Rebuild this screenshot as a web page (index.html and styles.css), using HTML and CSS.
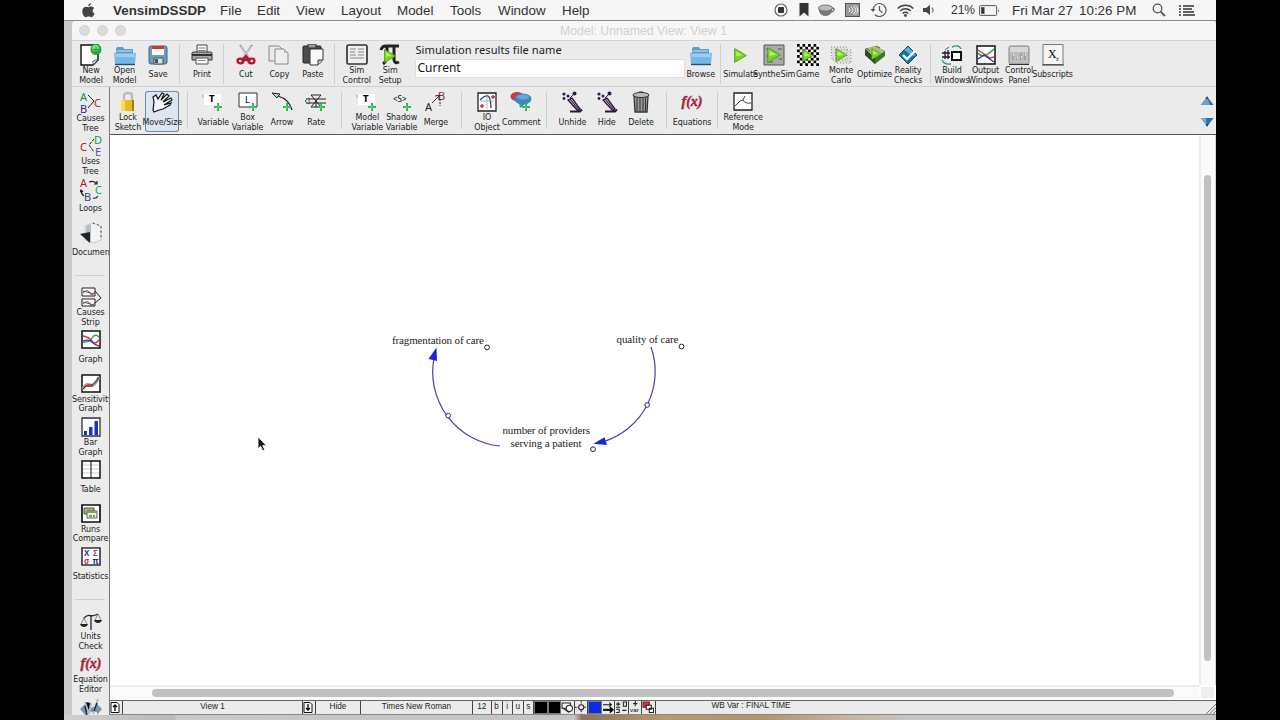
FILE: index.html
```
<!DOCTYPE html>
<html lang="en">

<head>
    <meta charset="UTF-8">
    <meta name="viewport" content="width=device-width, initial-scale=1.0">
    <title>VensimDSSDP</title>
    <link rel="stylesheet" href="styles.css">
</head>

<body>
    <!-- shared icon parts -->
    <svg class="defs">
        <symbol id="plus" viewBox="0 0 8 8"><path d="M3 0h2v3h3v2H5v3H3V5H0V3h3z" fill="#23b04a"/><path d="M3.7 1v6M1 4h6" stroke="#7be08d" stroke-width=".6"/></symbol>
        <symbol id="play" viewBox="0 0 12 14"><path d="M.5.5L11.5 7 .5 13.5z" fill="#7ed321" stroke="#4c9a1a" stroke-width=".8"/><path d="M2 3l6 3.700-6 1z" fill="#b6ee6a"/></symbol>
        <symbol id="folder" viewBox="0 0 22 22"><path d="M2 20V5l1-2h6l1 2h9v15z" fill="#5b9bd0"/><path d="M3 8h15V6H3z" fill="#8fc4ea"/><path d="M0 9h22l-1 11H1z" fill="#78b6e6"/><path d="M1 10h20v3H1z" fill="#9ccdf2"/><path d="M1 20.500h20" stroke="#24506f" stroke-width="1.400"/></symbol>
        <symbol id="wand" viewBox="0 0 22 22"><path d="M7 9l4-2 8 11-2 2z" fill="#b9a7c8" stroke="#2b1836" stroke-width="1.300"/><path d="M9 20.500h10l2-2" fill="none" stroke="#2b1836" stroke-width="2"/><path d="M9 8l9 11" stroke="#2b1836"/><path d="M9 7l4-4" stroke="#2b1c48"/><g fill="#2b1c48"><circle cx="3" cy="3" r="1.600"/><circle cx="7" cy="5" r="1.500"/><circle cx="3" cy="7.500" r="1.400"/><circle cx="13.500" cy="2.500" r="2"/></g></symbol>
        <symbol id="fx" viewBox="0 0 22 22"><text x="11" y="15" text-anchor="middle" textLength="21" lengthAdjust="spacingAndGlyphs" class="fx">f(x)</text></symbol>
    </svg>

    <div class="desktop">
        <div class="menubar">
            <svg width="13" height="15" viewBox="0 0 13 15" fill="#444"><path d="M9 0c.1 1.800-1.200 3.200-2.700 3.300C6.100 1.700 7.400.3 9 0zM6.500 4.300c.7 0 1.600-.8 2.900-.7 1.300.1 2.200.6 2.800 1.500-2.300 1.500-1.900 4.500.4 5.500-.7 1.800-1.900 3.600-3.200 3.600-1.100 0-1.500-.6-2.800-.6s-1.700.6-2.700.6C2 14.200.3 11.200.3 8.300c0-2.900 1.800-4.500 3.600-4.500 1.100 0 2 .5 2.600.5z"/></svg>
            <b>VensimDSSDP</b>
            <span>File</span>
            <span>Edit</span>
            <span>View</span>
            <span>Layout</span>
            <span>Model</span>
            <span>Tools</span>
            <span>Window</span>
            <span>Help</span>
            <svg width="14" height="14" viewBox="0 0 14 14"><circle cx="7" cy="7" r="6" fill="none" stroke="#666" stroke-width="1.200"/><rect x="4" y="4" width="6" height="6" rx="1" fill="#333"/></svg>
            <svg width="10" height="14" viewBox="0 0 10 14"><path d="M.5 0h9v13.500L5 9.500.5 13.500z" fill="#333"/></svg>
            <svg width="17" height="13" viewBox="0 0 17 13"><ellipse cx="7.500" cy="4" rx="7" ry="3" fill="#bbb" stroke="#777"/><path d="M.5 4c0 5 3 8 7 8s7-3 7-8c-2 4-12 4-14 0z" fill="#777"/><path d="M14 4c4 0 2 4-1 4" fill="none" stroke="#777" stroke-width="1.300"/></svg>
            <svg width="15" height="14" viewBox="0 0 15 14"><rect x=".5" y=".5" width="14" height="13" fill="#999" stroke="#555"/><path d="M4 5q2 2 0 4M6 4q4 3 0 6M8 3q6 4 0 8M10.500 2.500q5 4.500 0 9" fill="none" stroke="#f4f4f4"/></svg>
            <svg width="17" height="16" viewBox="0 0 17 16" fill="none" stroke="#555"><path d="M3 8a6.500 6.500 0 1 1 2 4.700" stroke-width="1.200"/><path d="M9.500 4v4.500l3 2" stroke-width="1.200"/><path d="M.5 7h5L3 10z" fill="#555" stroke="none"/></svg>
            <svg width="17" height="13" viewBox="0 0 17 13" fill="none" stroke="#444" stroke-width="1.500"><path d="M.7 4.500a11 11 0 0 1 15.600 0M3.200 7a7.500 7.500 0 0 1 10.600 0M5.700 9.500a4 4 0 0 1 5.600 0"/><circle cx="8.500" cy="11.500" r=".7"/></svg>
            <svg width="13" height="12" viewBox="0 0 13 12"><path d="M0 4h3l4-3v10L3 8H0z" fill="#444"/><path d="M9 3.500q2 2.500 0 5" fill="none" stroke="#777" stroke-width="1.200"/></svg>
            <span class="small">21%</span>
            <svg width="21" height="11" viewBox="0 0 21 11"><rect x=".6" y=".6" width="17" height="9.800" rx="1" fill="none" stroke="#555"/><path d="M2.200 2.200h3.300v6.600H2.200z" fill="#333"/><path d="M19 3.500q1.500 2 0 4" fill="#555"/></svg>
            <span>Fri Mar 27</span>
            <span>10:26 PM</span>
            <svg width="14" height="14" viewBox="0 0 14 14" fill="none" stroke="#555"><circle cx="5.500" cy="5.500" r="4.300" stroke-width="1.300"/><path d="M8.700 8.700L13 13" stroke-width="1.800"/></svg>
            <svg width="16" height="11" viewBox="0 0 16 11" stroke="#333" stroke-width="1.400"><path d="M0 1h2M4 1h11M0 4h2M4 4h9M0 7h2M4 7h11M0 10h2M4 10h12"/></svg>
        </div>

        <div class="window">
            <div class="titlebar">
                <i></i><i></i><i></i>
                <span>Model: Unnamed View: View 1</span>
            </div>

            <div class="toolbar main-tools">
                <div class="tool"><svg viewBox="0 0 22 22"><path d="M1 1h17v15l-5 5H1z" fill="#fff" stroke="#111" stroke-width="1.400"/><path d="M13 21v-4l5-2" fill="#ddd" stroke="#333" stroke-width=".7"/><circle cx="16" cy="5.500" r="5.500" fill="#27a83f"/><circle cx="15.500" cy="4" r="3.300" fill="#7de08b"/><path d="M16 2.500v6M13 5.500h6" stroke="#2a9140"/></svg><p>New<br>Model</p></div>
                <div class="tool"><svg><use href="#folder"/></svg><p>Open<br>Model</p></div>
                <div class="tool"><svg viewBox="0 0 22 22"><rect x="2" y="2" width="18" height="18" rx="2" fill="#6b9db7" stroke="#3c6880"/><path d="M5 2h12v9H5z" fill="#f7f7f7"/><path d="M5 2h12v3H5z" fill="#cc3b33"/><path d="M7 14h9v6H7z" fill="#d5e0e5" stroke="#456"/><path d="M8 15h3v4H8z" fill="#355c72"/></svg><p>Save</p></div>
                <div class="sep"></div>
                <div class="tool"><svg viewBox="0 0 22 22"><path d="M6 9V1h10v8" fill="#fff" stroke="#444"/><path d="M7.500 4h7M7.500 6.500h7" stroke="#777"/><path d="M1 9q0-1 2-1h16q2 0 2 1v7H1z" fill="#aaa" stroke="#333"/><path d="M1 11h20" stroke="#333" stroke-width="2"/><path d="M5 14h12v6H5z" fill="#fafafa" stroke="#555"/><path d="M7 16.500h8" stroke="#999"/></svg><p>Print</p></div>
                <div class="sep"></div>
                <div class="tool"><svg viewBox="0 0 22 22"><path d="M5 1l9 13M17 1L8 14" stroke="#999" stroke-width="2"/><path d="M5.500 2l8 11M16.500 2l-8 11" stroke="#eee" stroke-width=".7"/><g fill="none" stroke="#ae1830" stroke-width="2.300"><ellipse cx="5.500" cy="17" rx="3" ry="2.300"/><ellipse cx="16.500" cy="17" rx="3" ry="2.300"/><path d="M8 16l3-4 3 4z"/></g></svg><p>Cut</p></div>
                <div class="tool"><svg viewBox="0 0 22 22"><path d="M1 2h10l3 3v12H1z" fill="#e8e8e8" stroke="#888"/><path d="M7 5h9l4 4v11H7z" fill="#eee" stroke="#888"/><path d="M16 5v4h4z" fill="#bbb"/></svg><p>Copy</p></div>
                <div class="tool"><svg viewBox="0 0 22 22"><rect x="1" y="2" width="18" height="17" rx="1" fill="#4b4d50" stroke="#222"/><path d="M6 0h8v4H6z" fill="#999" stroke="#333"/><path d="M8 5h13v11l-5 5H8z" fill="#fafafa" stroke="#333"/><path d="M16 21v-5h5" fill="#ccc" stroke="#333"/></svg><p>Paste</p></div>
                <div class="sep"></div>
                <div class="tool"><svg viewBox="0 0 22 22"><rect x="1" y="1" width="20" height="19" rx="1.500" fill="#eee" stroke="#333" stroke-width="1.700"/><path d="M4 5h6M4 8h5M12 5h6M12 8h6M4 11h6M4 14h14M12 11h6" stroke="#888"/></svg><p>Sim<br>Control</p></div>
                <div class="tool"><svg viewBox="0 0 22 22"><path d="M2 6q1-4 5-4h13M8 3v9q-1 6-4 8M15 3v13q1 4 5 2" fill="none" stroke="#222" stroke-width="3"/><use href="#play" x="5" y="5" width="12" height="14"/></svg><p>Sim<br>Setup</p></div>
                <div class="run-name">
                    <label>Simulation results file name</label>
                    <div class="field">Current</div>
                </div>
                <div class="tool"><svg><use href="#folder"/></svg><p>Browse</p></div>
                <div class="sep narrow"></div>
                <div class="tool"><svg viewBox="0 0 22 22"><use href="#play" x="4" y="4" width="13" height="15"/></svg><p>Simulate</p></div>
                <div class="tool"><svg viewBox="0 0 22 22"><path d="M1 1h20v20H1z" fill="#aaa" stroke="#555"/><path d="M3 5h4M3 12h3M15 5h4M16 15h3M4 18h6" stroke="#555"/><use href="#play" x="4" y="3" width="14" height="16"/></svg><p>SyntheSim</p></div>
                <div class="tool"><svg viewBox="0 0 22 22"><defs><pattern id="check" width="5.500" height="5.500" patternUnits="userSpaceOnUse"><path d="M0 0h5.500v5.500H0z" fill="#fff"/><path d="M0 0h2.750v2.750H0zM2.750 2.750H5.500V5.500H2.750z"/></pattern></defs><path d="M0 0h22v22H0z" fill="url(#check)"/><use href="#play" x="5" y="5" width="12" height="13"/></svg><p>Game</p></div>
                <div class="tool"><svg viewBox="0 0 22 22"><path d="M1 3h16v13H2zM5 6h16v13H6z" fill="#ddd" stroke="#888" stroke-dasharray="1 2"/><use href="#play" x="5" y="4" width="13" height="14"/></svg><p>Monte<br>Carlo</p></div>
                <div class="tool"><svg viewBox="0 0 22 22"><path d="M1 5l10-3 10 5v5l-10 8L1 11z" fill="#407434"/><path d="M1 5l10-3 10 5-10 7z" fill="#a1c77d"/><path d="M1 5l10 9v6L1 11z" fill="#2d4a22"/><use href="#play" x="7" y="4" width="11" height="12"/><path d="M2 4l4 3M12 2l4 2" stroke="#7c452c"/></svg><p>Optimize</p></div>
                <div class="tool"><svg viewBox="0 0 22 22"><path d="M11 2l9 9-9 9-9-9z" fill="#1974a3" stroke="#164c6a"/><path d="M11 3l8 8-3 1-9-6z" fill="#5ab6da"/><path d="M6 11l4 4 8-8" fill="none" stroke="#fff" stroke-width="2.400"/></svg><p>Reality<br>Checks</p></div>
                <div class="sep"></div>
                <div class="tool"><svg viewBox="0 0 22 22"><path d="M11 8h9v8h-9z" fill="#fff" stroke="#111" stroke-width="2"/><path d="M11 3q7-3 9 2M10 20q-7 1-9-4" fill="none" stroke="#2aa15c" stroke-width="1.400"/><path d="M1 9h8M1 13h8M4 7v8M7 6v9" stroke="#17192e" stroke-width="1.300"/><path d="M4 6l4-3" stroke="#315ea5"/></svg><p>Build<br>Windows</p></div>
                <div class="tool"><svg viewBox="0 0 22 22"><path d="M2 2h18v18H2z" fill="#fff" stroke="#111" stroke-width="1.500"/><path d="M3 9q5 7 16-4" fill="none" stroke="#27985a" stroke-width="1.400"/><path d="M3 6l12 8 4-1" fill="none" stroke="#d43a3a" stroke-width="1.400"/><path d="M3 15l6-4 10 7" fill="none" stroke="#283895" stroke-width="1.400"/></svg><p>Output<br>Windows</p></div>
                <div class="tool"><svg viewBox="0 0 22 22"><rect x="1" y="2" width="20" height="18" rx="1.500" fill="#bdbdbd" stroke="#888"/><path d="M2 3h18v5H2z" fill="#d8d8d8"/><path d="M5 10v6M9 13v3M13 9v7M17 10v6" stroke="#a2a2a2" stroke-width="2"/><path d="M5 11h1M9 14h1M13 13h1M17 11h1" stroke="#e8e8e8" stroke-width="2"/><path d="M1 20.500h20" stroke="#333"/></svg><p>Control<br>Panel</p></div>
                <div class="tool"><svg viewBox="0 0 22 22"><path d="M1 .5h20v20H1z" fill="#f5f5f5" stroke="#6e7c87"/><path d="M0 21h22" stroke="#333"/><text x="6" y="14" class="serif">X</text><text x="14" y="17" class="sub">z</text></svg><p>Subscripts</p></div>
            </div>

            <div class="work">
                <div class="sidebar">
                    <div class="tool"><svg viewBox="0 0 22 22"><text x="0" y="9" fill="#168f3d">A</text><text x="0" y="21" fill="#27278e">B</text><text x="14" y="15" fill="#b32135">C</text><path d="M8 3l6 6-6 7" fill="none" stroke="#222"/></svg><p>Causes<br>Tree</p></div>
                    <div class="tool"><svg viewBox="0 0 22 22"><text x="0" y="16" fill="#a41e2c">C</text><text x="14" y="9" fill="#219d45">D</text><text x="15" y="21" fill="#5352a6">E</text><path d="M14 4l-5 6 5 7" fill="none" stroke="#222" stroke-dasharray="3 1"/></svg><p>Uses<br>Tree</p></div>
                    <div class="tool"><svg viewBox="0 0 22 22"><text x="0" y="8" fill="#9f1f2e">A</text><text x="15" y="15" fill="#25a34a">C</text><text x="4" y="22" fill="#3838a0">B</text><path d="M9 3q5-2 8 2m0-3v3h-3M1 11q0 4 3 6M0 13l1-2 2 2M13 19q3 1 5-2" fill="none" stroke="#222" stroke-width="1.200"/></svg><p>Loops</p></div>
                    <div class="tool"><svg viewBox="0 0 22 22"><path d="M5 4l7-3 9 3v14l-8 3-8-3z" fill="#f1f3f4" stroke="#bbb" stroke-width=".7"/><path d="M6 4l5-2v18l-5-2z" fill="#b4c0c5"/><path d="M0 12l10 9V10z" fill="#202427"/><path d="M13 1l8 3v14" fill="none" stroke="#222" stroke-dasharray="1.500 3"/></svg><p class="long">Document</p></div>
                    <hr>
                    <div class="tool"><svg viewBox="0 0 22 22"><g fill="#fff" stroke="#222"><path d="M2 2h13v8H2zM2 13h13v7H2z"/><path d="M15 5l6 7-6 5" fill="none"/></g><path d="M3 7q5-5 7 0t5-2M3 18q5-5 7 0t5-2" fill="none" stroke="#a54053"/><path d="M3 5l11 3M3 16l11 3" stroke="#555"/></svg><p>Causes<br>Strip</p></div>
                    <div class="tool"><svg viewBox="0 0 22 22"><path d="M2 2h18v17H2z" fill="#fff" stroke="#111" stroke-width="1.500"/><path d="M3 13q6 1 9-4t7-1" fill="none" stroke="#27985a" stroke-width="1.300"/><path d="M3 7q6 1 9 5t7-1" fill="none" stroke="#d43a3a" stroke-width="1.300"/><path d="M3 12q6-2 9 1t7 4" fill="none" stroke="#283895" stroke-width="1.300"/></svg><p>Graph</p></div>
                    <div class="tool"><svg viewBox="0 0 22 22"><path d="M2 2h18v17H2z" fill="#fff" stroke="#111" stroke-width="1.500"/><path d="M3 16q3-6 7-4t9-8" fill="none" stroke="#999" stroke-width="3"/><path d="M3 16q3-5 7-4t9-8" fill="none" stroke="#333"/><path d="M6 13h7" stroke="#be4141" stroke-width="2"/></svg><p class="long">Sensitivity</p><p class="second">Graph</p></div>
                    <div class="tool"><svg viewBox="0 0 22 22"><path d="M2 2h18v18H2z" fill="#fff" stroke="#333" stroke-width="1.300"/><path d="M4 15h3v4H4zM9 11h3.500v8H9zM14.500 5H18v14h-3.500z" fill="#1735c7"/></svg><p>Bar<br>Graph</p></div>
                    <div class="tool"><svg viewBox="0 0 22 22"><path d="M2 2h18v17H2z" fill="#fff" stroke="#111" stroke-width="1.500"/><path d="M3 6h16M3 10h16M3 14h16" stroke="#ccc"/><path d="M11 2v17" stroke="#111"/></svg><p>Table</p></div>
                    <div class="tool"><svg viewBox="0 0 22 22"><path d="M2 2h18v17H2z" fill="#fff" stroke="#111" stroke-width="1.700"/><path d="M4 5h10v6H4z" fill="#b7a98e" stroke="#555"/><path d="M7 8h10v7H7z" fill="#eef4dc" stroke="#496b3d"/><path d="M7 8h10v2H7z" fill="#829f65"/><path d="M9 13h3M14 12v2" stroke="#222"/></svg><p>Runs<br>Compare</p></div>
                    <div class="tool"><svg viewBox="0 0 22 22"><path d="M2 2h18v17H2z" fill="#fff" stroke="#333" stroke-width="1.600"/><g class="stat"><text x="4" y="9.500" fill="#3434af">X</text><text x="13" y="9.500" fill="#b63f56">Σ</text><text x="4" y="17.500" fill="#b63f56">σ</text><text x="12.500" y="17.500" fill="#292996">π</text></g></svg><p>Statistics</p></div>
                    <hr>
                    <div class="tool"><svg viewBox="0 0 22 22"><path d="M11 5v15M4 8q4-4 7-2 3 0 7-2" fill="none" stroke="#222" stroke-width="1.300"/><path d="M4 8l-3 6M4 8l3 6M18 4l-3 6M18 4l3 6" stroke="#666" stroke-width=".8"/><path d="M0 14h8q-1 3-4 3t-4-3zM14 10h8q-1 3-4 3t-4-3z" fill="#222"/></svg><p>Units<br>Check</p></div>
                    <div class="tool"><svg><use href="#fx"/></svg><p>Equation<br>Editor</p></div>
                    <div class="tool"><svg viewBox="0 0 22 22"><path d="M0 12l6-6v3l5 2 5-2V6l6 6-5 6v-3H6v4z" fill="#7796ab"/><path d="M5 5l4 12 2-11M13 17l5-15" stroke="#a9bfcc" stroke-width="2"/><path d="M5 9l2 9M14 14l3-8" stroke="#1b2e3d" stroke-width="1.500"/></svg></div>
                </div>

                <div class="view">
                    <div class="toolbar sketch-tools">
                        <div class="tool"><svg viewBox="0 0 22 22"><path d="M7 10V4q0-2 4-2t4 2v6" fill="none" stroke="#bbb" stroke-width="2.300"/><path d="M4 9h13v11H4z" fill="#e7b922"/><path d="M4 9h4v11H4z" fill="#f8db61"/><path d="M15 9h2v11h-2z" fill="#aa7c0b"/></svg><p>Lock<br>Sketch</p></div>
                        <div class="tool active"><svg viewBox="0 0 22 22"><path d="M2 19l1-8-1-5 3-2 2 4 4-6 2 1-3 6 6-6 2 2-6 6 8-4 1 2-8 5 7-2-1 2-7 4-4 1-5 2z" fill="#f2f5fa" stroke="#111" stroke-width="1.200"/></svg><p>Move/Size</p></div>
                        <div class="sep"></div>
                        <div class="tool"><svg viewBox="0 0 22 22"><path d="M2 3h17v11H2z" fill="#fff"/><text x="7" y="11" class="letter">T</text><path d="M0 4h1v3" stroke="#aaa" fill="none"/><use href="#plus" x="12" y="12" width="8" height="8"/></svg><p>Variable</p></div>
                        <div class="tool"><svg viewBox="0 0 22 22"><path d="M2 2h18v14H2z" fill="#fff" stroke="#333"/><text x="8" y="12" class="light">L</text><use href="#plus" x="12" y="12" width="8" height="8"/></svg><p>Box<br>Variable</p></div>
                        <div class="tool"><svg viewBox="0 0 22 22"><path d="M1 2l8 1-3 4z" fill="#bcd9cc" stroke="#222"/><path d="M7 5q11 3 14 14" fill="none" stroke="#222" stroke-width="1.200"/><use href="#plus" x="12" y="12" width="8" height="8"/></svg><p>Arrow</p></div>
                        <div class="tool"><svg viewBox="0 0 22 22"><path d="M1 8h20M1 12h20M6 4h10L6 16h10zM11 10v6" fill="none" stroke="#222"/><path d="M0 10l4-3v6z" fill="#fff" stroke="#222" stroke-width=".8"/><use href="#plus" x="12" y="12" width="8" height="8"/></svg><p>Rate</p></div>
                        <div class="sep"></div>
                        <div class="tool"><svg viewBox="0 0 22 22"><path d="M2 3h17v11H2z" fill="#fff"/><text x="7" y="11" class="letter">T</text><path d="M0 4h1v3" stroke="#aaa" fill="none"/><use href="#plus" x="12" y="12" width="8" height="8"/></svg><p>Model<br>Variable</p></div>
                        <div class="tool"><svg viewBox="0 0 22 22"><text x="2" y="11" class="shadow">&lt;S&gt;</text><use href="#plus" x="12" y="12" width="8" height="8"/></svg><p>Shadow<br>Variable</p></div>
                        <div class="tool"><svg viewBox="0 0 22 22"><text x="0" y="20" fill="#222">A</text><text x="13" y="9" fill="#8e2639">B</text><path d="M7 12l8-8M15 4l-5 1M14 4v5" stroke="#333"/><path d="M15 8v7" stroke="#222" stroke-dasharray="2 1"/></svg><p>Merge</p></div>
                        <div class="sep"></div>
                        <div class="tool"><svg viewBox="0 0 22 22"><path d="M2 2h18v18H2z" fill="#fff" stroke="#222" stroke-width="1.300"/><path d="M4 9q5-5 8-4 3 2 3 12" fill="none" stroke="#26436c" stroke-width="1.300"/><path d="M11 3v15M4 10h14" stroke="#999" stroke-width=".7"/><path d="M15 6h4M17 4v4M4 15h4M6 13v4" stroke="#d92c42" stroke-width="1.500"/></svg><p>IO<br>Object</p></div>
                        <div class="tool"><svg viewBox="0 0 22 22"><ellipse cx="7" cy="5.500" rx="6.500" ry="4.500" fill="#c43b43"/><ellipse cx="13" cy="8" rx="8.500" ry="5.500" fill="#398ac0"/><ellipse cx="13" cy="6" rx="6" ry="2.500" fill="#62aad8"/><path d="M9 12l1 5 5-4z" fill="#398ac0"/><use href="#plus" x="12" y="12" width="8" height="8"/></svg><p>Comment</p></div>
                        <div class="sep"></div>
                        <div class="tool"><svg><use href="#wand"/></svg><p>Unhide</p></div>
                        <div class="tool"><svg><use href="#wand"/></svg><p>Hide</p></div>
                        <div class="tool"><svg viewBox="0 0 22 22"><path d="M4 5h14l-1 16H5z" fill="#999" stroke="#333" stroke-width="1.300"/><path d="M7 6v14M10 6v14M13 6v14M15.500 6v14" stroke="#333"/><ellipse cx="11" cy="4" rx="8" ry="2.500" fill="#bbb" stroke="#333"/><path d="M9 1h4" stroke="#333"/></svg><p>Delete</p></div>
                        <div class="sep"></div>
                        <div class="tool"><svg><use href="#fx"/></svg><p>Equations</p></div>
                        <div class="sep"></div>
                        <div class="tool"><svg viewBox="0 0 22 22"><path d="M2 2h18v17H2z" fill="#fff" stroke="#222" stroke-width="1.300"/><path d="M3 15l5-5 3-1 2-4M11 9q2 4 8 3" fill="none" stroke="#444"/></svg><p>Reference<br>Mode</p></div>
                        <div class="pager">
                            <svg width="14" height="10" viewBox="0 0 14 10"><path d="M7 .5l6.500 8.500H.5z" fill="#6fa0c8"/><path d="M7 .5L10 9l3.500 0z" fill="#396d9a"/><path d="M7 0l1.500 3h-3z" fill="#26455f"/></svg>
                            <svg width="14" height="10" viewBox="0 0 14 10"><path d="M.5 1h13L7 9.500z" fill="#6fa8cf"/><path d="M6 1h7.500L7 9.500z" fill="#336f9e"/><path d="M7 10L5.500 7h3z" fill="#26455f"/></svg>
                        </div>
                    </div>

                    <div class="sketch">
                        <svg class="diagram" width="1089" height="550" viewBox="110 135 1089 550">
                            <g fill="none" stroke="#4444ac" stroke-width="1.200">
                                <path d="M500 446A74.500 74.500 0 0 1 434 358"/>
                                <path d="M651 347A73.500 73.500 0 0 1 604 441.500"/>
                            </g>
                            <path d="M436.500 347.500L428.500 359 437 361zM593.500 443.700L604.500 437.300 607 445z" fill="#1a24dc"/>
                            <g fill="#fff" stroke="#26268c">
                                <circle cx="448.200" cy="415.700" r="2.300"/>
                                <circle cx="647.200" cy="405" r="2.300"/>
                            </g>
                            <g fill="#fff" stroke="#222">
                                <circle cx="487" cy="347.400" r="2.400"/>
                                <circle cx="681.500" cy="346.500" r="2.400"/>
                                <circle cx="593" cy="449.200" r="2.400"/>
                            </g>
                            <text x="392" y="344" textLength="92">fragmentation of care</text>
                            <text x="616.500" y="343" textLength="62">quality of care</text>
                            <text x="502.500" y="434" textLength="87.500">number of providers</text>
                            <text x="510.500" y="446.500" textLength="71">serving a patient</text>
                        </svg>
                        <div class="vscroll"><div></div></div>
                        <div class="hscroll"><div></div></div>
                        <div class="corner"></div>
                        <svg class="cursor" width="10" height="16" viewBox="0 0 10 16"><path d="M1 1v11.500l2.700-2.300 2 4.600 2-.9-2-4.400h3.600z" fill="#111" stroke="#fff" stroke-width=".8"/></svg>
                    </div>

                    <div class="status">
                        <div class="arrow"><svg width="10" height="11" viewBox="0 0 10 11"><path d="M1 .5h6l2 2v8H1z" fill="#fff" stroke="#111"/><path d="M5 9V3M3 5l2-2 2 2" fill="none" stroke="#111" stroke-width="1.400"/></svg></div>
                        <div class="view-name">View 1</div>
                        <div class="arrow"><svg width="10" height="11" viewBox="0 0 10 11"><path d="M1 .5h6l2 2v8H1z" fill="#fff" stroke="#111"/><path d="M5 2v6M3 6l2 2 2-2" fill="none" stroke="#111" stroke-width="1.400"/></svg></div>
                        <div class="hide">Hide</div>
                        <div class="font">Times New Roman</div>
                        <div>12</div>
                        <div>b</div>
                        <div>i</div>
                        <div>u</div>
                        <div>s</div>
                        <div class="swatch"></div>
                        <div class="swatch"></div>
                        <div><svg viewBox="0 0 12 12" fill="#fff" stroke="#222"><path d="M1 2h8v5H1z"/><circle cx="8" cy="7" r="3"/><path d="M2 7l6 4"/></svg></div>
                        <div><svg viewBox="0 0 12 12" fill="none" stroke="#222"><circle cx="6" cy="6" r="2.500"/><path d="M0 6h3M9 6h3M6 0v3M6 9v3" stroke-dasharray="1.500 1"/></svg></div>
                        <div class="swatch blue"></div>
                        <div><svg viewBox="0 0 12 12" stroke="#111"><path d="M1 3.500h8M7 1.500l2 2-2 2" fill="none"/><path d="M1 8.500h8" stroke-width="2"/><path d="M8 6l3 2.500L8 11z"/></svg></div>
                        <div><svg viewBox="0 0 12 12" fill="none" stroke="#222"><path d="M1 3h4M3 1v4M1 6h4M8 1h3v4H8zM1 8h3v3H1M7 9h4"/></svg></div>
                        <div><svg viewBox="0 0 12 12"><path d="M6 0v5M4 2.500h4" stroke="#222"/><text x="1" y="11" class="var">var</text></svg></div>
                        <div><svg viewBox="0 0 12 12"><path d="M1 1h6v5H1z" fill="#d53545" stroke="#622"/><path d="M4 4h5v4H4zM7 7h4v4H7z" fill="#fff" stroke="#222"/></svg></div>
                        <div class="message">WB Var : FINAL TIME</div>
                        <svg class="grip" width="10" height="10" viewBox="0 0 10 10" stroke="#777"><path d="M0 10L10 0M3.500 10L10 3.500M7 10l3-3"/></svg>
                    </div>
                </div>
            </div>
        </div>
        <div class="wallpaper"></div>
    </div>
</body>

</html>
```
FILE: styles.css
```
* {
    margin: 0;
    padding: 0;
    box-sizing: border-box;
}

body {
    height: 720px;
    overflow: hidden;
    background-color: #000;
    font-family: "Liberation Sans", Arial, sans-serif;
}

svg {
    display: block;
}

.defs {
    position: absolute;
    width: 0;
    height: 0;
}

.desktop {
    display: flex;
    flex-direction: column;
    width: 1152px;
    height: 720px;
    margin: 0 auto;
    background-color: #c9c9c9;
}

/* menu bar */
.menubar {
    display: grid;
    grid-template-columns: 31px 107px 37px 39px 45px 56px 53px 48px 64px 212px 25px 19px 27px 25px 27px 26px 28px 28px 33px 67px 73px 27px 20px;
    align-items: center;
    height: 21px;
    padding-left: 18px;
    border-bottom: 1px solid #8d8d8d;
    background-color: #f6f6f6;
    color: #333;
    font-size: 13.4px;
    white-space: nowrap;
}

.menubar .small {
    font-size: 12px;
}

/* window */
.window {
    width: 1144px;
    height: 694px;
    margin-left: 8px;
    border-radius: 4px 4px 0 0;
    background-color: #ebebeb;
}

.titlebar {
    display: flex;
    align-items: center;
    height: 20px;
    padding-left: 7px;
    border-bottom: 1px solid #d2d2d2;
    border-radius: 4px 4px 0 0;
    background-color: #f6f6f6;
}

.titlebar i {
    width: 11px;
    height: 11px;
    margin-right: 7px;
    border: 1px solid #d0d0d0;
    border-radius: 50%;
    background-color: #dcdcdc;
}

.titlebar span {
    margin-left: 427px;
    color: #cfcfcf;
    font-size: 12.3px;
}

/* tools */
.toolbar {
    display: flex;
    flex: none;
}

.main-tools {
    height: 46px;
    padding: 3px 0 0 2.3px;
    border-bottom: 1px solid #d0d0d0;
}

.tool {
    display: flex;
    flex-direction: column;
    flex: none;
    align-items: center;
    width: 33.5px;
    height: 41px;
}

.tool svg {
    flex: none;
    width: 22px;
    height: 22px;
}

.tool p {
    margin: auto 0;
    color: #1c1c1c;
    font-family: "DejaVu Sans", sans-serif;
    font-size: 8px;
    line-height: 9.7px;
    letter-spacing: -0.1px;
    text-align: center;
    white-space: nowrap;
}

.main-tools .tool {
    height: 40px;
}

.tool text {
    font-family: "Noto Sans", sans-serif;
    font-size: 11px;
}

.tool .letter {
    font-family: "DejaVu Sans", sans-serif;
    font-weight: bold;
    font-size: 8px;
}

.tool .light {
    font-size: 9px;
}

.tool .shadow {
    font-size: 8px;
}

.tool .serif {
    font-family: "Liberation Serif", serif;
    font-size: 12px;
}

.tool .sub {
    font-size: 6px;
}

.tool .stat text {
    font-size: 8px;
    font-weight: bold;
}

.fx {
    fill: #b91f38;
    stroke: #8f1730;
    stroke-width: .4px;
    font: italic bold 14px "Liberation Serif", serif;
}

.sep {
    flex: none;
    width: 10.4px;
    height: 40px;
    background: linear-gradient(#cfcfcf, #cfcfcf) 50% 0 / 1px 100% no-repeat;
}

.sep.narrow {
    width: 6.4px;
}

.run-name {
    width: 277px;
    margin-top: -3px;
    padding: 2px 0 0 8.5px;
    font-family: "Noto Sans", sans-serif;
    font-size: 11.1px;
    color: #222;
}

.run-name label {
    display: block;
    height: 16px;
    line-height: 13px;
    letter-spacing: 0.05px;
}

.field {
    width: 270px;
    height: 19px;
    padding-left: 1px;
    border: 1px solid #ddd;
    background-color: #fff;
    color: #111;
    font-size: 12px;
    line-height: 16px;
}

.work {
    display: flex;
    height: 628px;
}

.sidebar {
    flex: none;
    width: 38px;
    padding-top: 5px;
    border-right: 1px solid #777;
    overflow: hidden;
}

.sidebar .tool {
    width: 37px;
    height: 43.3px;
    padding-bottom: 4px;
}

.sidebar .long {
    align-self: flex-start;
}

.sidebar .long:not(:last-child) {
    margin-bottom: 0;
}

.sidebar .second {
    margin-top: 0;
}

.sidebar hr {
    height: 1px;
    margin: 9.9px 4px 10px 3px;
    border: 0;
    background-color: #cfcfcf;
}

.view {
    display: flex;
    flex: none;
    flex-direction: column;
    width: 1106px;
}

.sketch-tools {
    height: 48px;
    padding: 4px 2px 0 0.8px;
    border-bottom: 1px solid #555;
}

.sketch-tools .tool {
    width: 34.3px;
}

.sketch-tools .sep {
    width: 16.8px;
    height: 38px;
}

.sketch-tools .active {
    border-radius: 3px;
    background-color: #dce5f0;
    box-shadow: inset 0 0 0 1px #7186a8;
}

.pager {
    display: flex;
    flex-direction: column;
    gap: 11px;
    margin: 5px 0 0 auto;
}

/* sketch area, with scrollbars on the right and bottom */
.sketch {
    position: relative;
    display: grid;
    grid-template-columns: 1089px 17px;
    grid-template-rows: 550px 15px;
    background-color: #fff;
}

.diagram text {
    fill: #222;
    font-family: "Liberation Serif", "Times New Roman", serif;
    font-size: 11px;
}

.vscroll {
    padding: 40px 4px 0 3px;
    border-left: 2px solid #ededed;
    border-right: 1px solid #d5d5d5;
    background-color: #fafafa;
}

.vscroll div {
    height: 486px;
    border-radius: 4px;
    background-color: #c1c1c1;
}

.hscroll {
    padding: 2px 25px 0 42px;
    border-top: 2px solid #ededed;
    background-color: #fafafa;
}

.hscroll div {
    height: 8px;
    border-radius: 4px;
    background-color: #c1c1c1;
}

.corner {
    margin: 2px;
    background-color: #eee;
}

.cursor {
    position: absolute;
    left: 147px;
    top: 301px;
}

/* status bar */
.status {
    display: grid;
    grid-template-columns: 13px 180px 13px 45px 112px 18.500px 11px 10.500px 10.500px 10.500px repeat(9, 13.500px) 191px 1fr;
    flex: 1;
    border-top: 1px solid #666;
    border-bottom: 1px solid #888;
    color: #222;
    font-size: 8.2px;
    line-height: 12px;
    text-align: center;
}

.status div {
    border-right: 1px solid #444;
}

.status .arrow {
    padding-top: 1px;
}

.status .swatch {
    border: 1px solid #777;
    background-color: #000;
}

.status .blue {
    background-color: #0b2be8;
}

.status .message {
    border: 0;
    line-height: 9px;
}

.status .var {
    font-size: 6px;
}

.status .grip {
    align-self: end;
    justify-self: end;
}

.wallpaper {
    flex: 1;
    background: linear-gradient(90deg, #cfcfcf 0, #b9b9b9 110px, #c9c9c9 113px, #c4c4c4 510px, #8e7355 518px, #b79a70 600px, #b2946d 700px, #c3b49c 780px, #c7c7c7 850px);
}
```
